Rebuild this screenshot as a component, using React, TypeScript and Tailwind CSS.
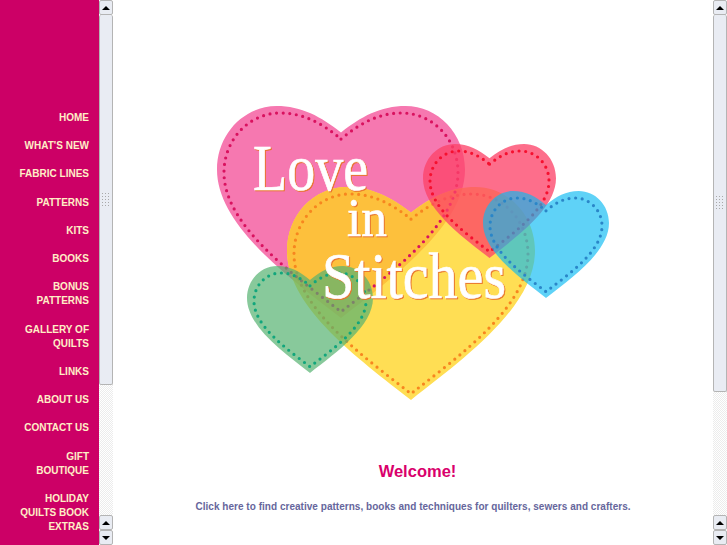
const menu = [
  ["HOME"],
  ["WHAT'S NEW"],
  ["FABRIC LINES"],
  ["PATTERNS"],
  ["KITS"],
  ["BOOKS"],
  ["BONUS", "PATTERNS"],
  ["GALLERY OF", "QUILTS"],
  ["LINKS"],
  ["ABOUT US"],
  ["CONTACT US"],
  ["GIFT", "BOUTIQUE"],
  ["HOLIDAY", "QUILTS BOOK", "EXTRAS"],
];

// heart outline from its bounding box, n = notch depth as a fraction of height
function heartPath(x: number, y: number, w: number, h: number, n: number) {
  const px = (u: number) => x + u * w;
  const py = (v: number) => y + v * h;
  return [
    `M${px(0.5)} ${py(n)}`,
    `C${px(0.58)} ${py(n * 0.4)} ${px(0.66)} ${py(0)} ${px(0.76)} ${py(0)}`,
    `C${px(0.89)} ${py(0)} ${px(1)} ${py(0.13)} ${px(1)} ${py(0.3)}`,
    `C${px(1)} ${py(0.56)} ${px(0.72)} ${py(0.8)} ${px(0.5)} ${py(1)}`,
    `C${px(0.28)} ${py(0.8)} ${px(0)} ${py(0.56)} ${px(0)} ${py(0.3)}`,
    `C${px(0)} ${py(0.13)} ${px(0.11)} ${py(0)} ${px(0.24)} ${py(0)}`,
    `C${px(0.34)} ${py(0)} ${px(0.42)} ${py(n * 0.4)} ${px(0.5)} ${py(n)}Z`,
  ].join(" ");
}

function inner(x: number, y: number, w: number, h: number, n: number, inset: number) {
  return heartPath(x + inset, y + inset, w - inset * 2, h - inset * 1.9, n * 1.05);
}

function Stitch({ d, color }: { d: string; color: string }) {
  return <path d={d} fill="none" stroke={color} strokeWidth="3.2" strokeLinecap="round" strokeDasharray="0 6.6" />;
}

function Logo() {
  const pink = [217, 106, 248, 212, 0.125] as const;
  const yellow = [287, 187, 248, 213, 0.12] as const;
  const red = [423, 144, 133, 114, 0.125] as const;
  const blue = [483, 191, 126, 107, 0.13] as const;
  const green = [247, 266, 126, 107, 0.13] as const;
  return (
    <svg viewBox="113 90 600 320" className="block w-[600px] h-[320px]">
      <defs>
        <clipPath id="inPink">
          <path d={heartPath(...pink)} />
        </clipPath>
      </defs>
      <path d={heartPath(...pink)} fill="#f678b0" />
      <path d={heartPath(...yellow)} fill="#ffde54" />
      <path d={heartPath(...yellow)} fill="#fdc03c" clipPath="url(#inPink)" />
      <Stitch d={inner(...pink, 7)} color="#d9125f" />
      <Stitch d={inner(...yellow, 7)} color="#f7861f" />
      <path d={heartPath(...red)} fill="#fc4368" fillOpacity="0.77" />
      <Stitch d={inner(...red, 7)} color="#f5102f" />
      <path d={heartPath(...blue)} fill="#09baf3" fillOpacity="0.65" />
      <Stitch d={inner(...blue, 7)} color="#2a86c8" />
      <path d={heartPath(...green)} fill="#55b270" fillOpacity="0.7" />
      <Stitch d={inner(...green, 7)} color="#12a67c" />
      <g
        fill="#ffffff"
        stroke="#ffffff"
        strokeWidth="0.7"
        fontFamily="'Liberation Serif', serif"
        className="drop-shadow-[1px_1px_0_#e8742c]"
      >
        <text x="253" y="190" fontSize="66" textLength="115" lengthAdjust="spacingAndGlyphs">Love</text>
        <text x="347" y="236" fontSize="54" textLength="40" lengthAdjust="spacingAndGlyphs">in</text>
        <text x="322" y="298" fontSize="66" textLength="184" lengthAdjust="spacingAndGlyphs">Stitches</text>
      </g>
    </svg>
  );
}

function ArrowButton({ up }: { up: boolean }) {
  return (
    <div className="h-[15px] shrink-0 flex items-center justify-center rounded-[2px] border border-[#b4b4b4] bg-[#e9ecf3]">
      <div
        className={
          up
            ? "w-0 h-0 border-x-[4px] border-x-transparent border-b-[4px] border-b-black"
            : "w-0 h-0 border-x-[4px] border-x-transparent border-t-[4px] border-t-black"
        }
      />
    </div>
  );
}

function Scrollbar({ thumb }: { thumb: string }) {
  return (
    <div className="w-[14px] h-full shrink-0 flex flex-col">
      <ArrowButton up />
      <div className={`${thumb} shrink-0 flex items-center justify-center rounded-[2px] border-x border-b border-[#b4b4b4] bg-[#e9ecf3]`}>
        <div className="w-[10px] h-[16px] bg-[radial-gradient(#a9a9a9_0.7px,transparent_0.9px)] bg-size-[3px_3px]" />
      </div>
      <div className="flex-1 bg-[repeating-conic-gradient(#ececec_0_25%,#ffffff_0_50%)] bg-size-[2px_2px]" />
      <ArrowButton up />
      <ArrowButton up={false} />
    </div>
  );
}

export default function App() {
  return (
    <div className="w-[727px] h-[545px] overflow-hidden flex bg-white font-['Liberation_Sans',Arial,sans-serif]">
      <nav className="w-[99px] h-full shrink-0 bg-[#cc0066] pt-[111px] pr-[10px] flex flex-col gap-[14px] text-right text-[10px] leading-[14.2px] font-bold text-[#ffeec6]">
        {menu.map((lines) => (
          <a key={lines[0]} className="block">
            {lines.map((line) => (
              <div key={line}>{line}</div>
            ))}
          </a>
        ))}
      </nav>
      <Scrollbar thumb="h-[370px]" />
      <main className="flex-1 flex flex-col items-center pt-[90px]">
        <Logo />
        <h1 className="mt-[52px] ml-[9px] text-[16.5px] leading-[18px] font-bold text-[#d9006c]">Welcome!</h1>
        <p className="mt-[20px] text-[10px] tracking-[0.03px] leading-[14px] font-bold text-[#66669c]">
          Click here to find creative patterns, books and techniques for quilters, sewers and crafters.
        </p>
      </main>
      <Scrollbar thumb="h-[377px]" />
    </div>
  );
}
